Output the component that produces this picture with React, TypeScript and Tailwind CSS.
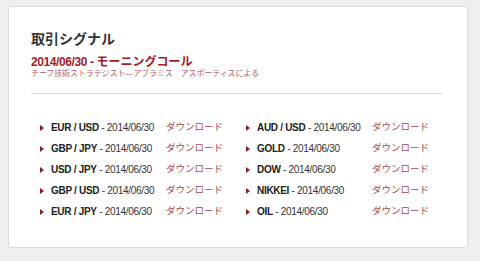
import React from "react";

const signals = [
  ["EUR / USD", "AUD / USD"],
  ["GBP / JPY", "GOLD"],
  ["USD / JPY", "DOW"],
  ["GBP / USD", "NIKKEI"],
  ["EUR / JPY", "OIL"],
];

function Signal({ name }: { name: string }) {
  return (
    <div className="flex items-center h-[21px]">
      <span className="w-0 h-0 border-y-[3px] border-y-transparent border-l-[4px] border-l-[#8e1b22] mr-[7px]" />
      <span className="w-[115px] text-[10px] tracking-[-0.3px] text-[#333] whitespace-nowrap">
        <b className="text-[#222]">{name}</b> - 2014/06/30
      </span>
      <span className="text-[9.5px] text-[#a5474e]">ダウンロード</span>
    </div>
  );
}

export default function App() {
  return (
    <div className="w-[480px] h-[261px] bg-[#efefef] pt-[6px] pl-[8px] font-['Liberation_Sans','Noto_Sans_CJK_JP',sans-serif]">
      <div className="w-[460px] h-[242px] bg-white border border-[#dcdcdc] rounded-[3px] pt-[23px] pl-[22px] pr-[25px]">
        <h2 className="text-[14px] leading-[18px] font-semibold text-[#333]">取引シグナル</h2>
        <h3 className="mt-[7px] text-[12px] leading-[14px] font-bold text-[#a51d24]">
          <span className="tracking-[-0.4px]">2014/06/30 - </span>モーニングコール
        </h3>
        <p className="text-[8px] leading-[10px] tracking-[-0.1px] text-[#b0626a]">
          チーフ技術ストラテジスト—アブラミス　アスポーティスによる
        </p>
        <div className="mt-[14px] border-t border-[#d6d6d6]" />
        <div className="mt-[23px] ml-[9px] grid grid-cols-[206px_206px]">
          {signals.map(([a, b]) => (
            <React.Fragment key={a + b}>
              <Signal name={a} />
              <Signal name={b} />
            </React.Fragment>
          ))}
        </div>
      </div>
    </div>
  );
}
